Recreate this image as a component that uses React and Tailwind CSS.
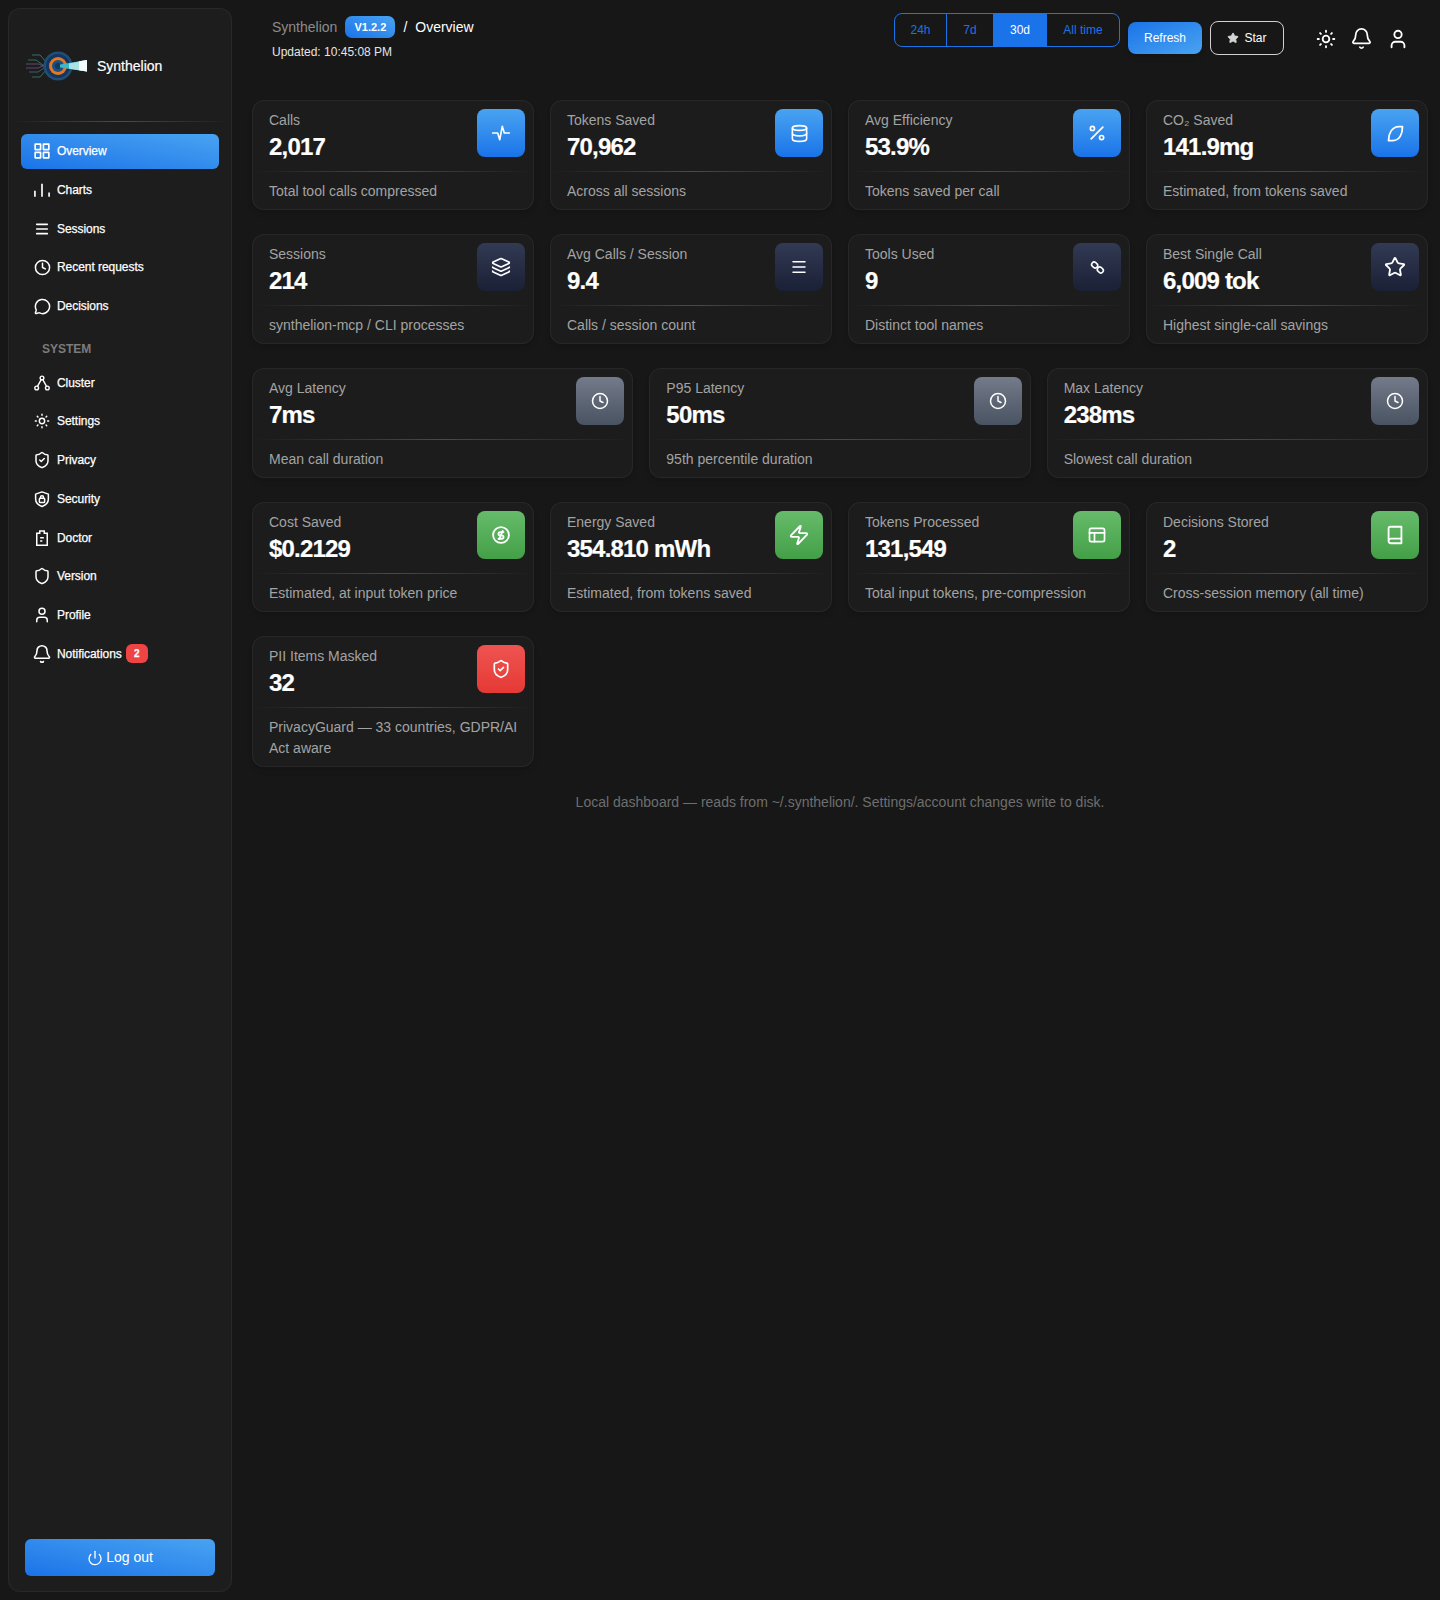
import { Bell, Clock, Database, Layers, Menu, MessageCircle, Percent, Power, Shield, ShieldCheck, Star, User, Zap } from "lucide-react";

function Svg({ size = 18, sw = 2, children }) {
    return (
        <svg width={size} height={size} viewBox="0 0 24 24" fill="none" stroke="currentColor" strokeWidth={sw} strokeLinecap="round" strokeLinejoin="round">
            {children}
        </svg>
    );
}

const GridIcon = (p) => (
    <Svg {...p} sw={2}>
        <rect x="3.8" y="3.8" width="6.5" height="6.5" /><rect x="13.7" y="3.8" width="6.5" height="6.5" />
        <rect x="3.8" y="13.7" width="6.5" height="6.5" /><rect x="13.7" y="13.7" width="6.5" height="6.5" />
    </Svg>
);
const BarsIcon = (p) => (
    <Svg {...p} sw={2}>
        <path d="M3.5 20v-7" strokeLinecap="butt" /><path d="M12 20V4.5" strokeLinecap="butt" /><path d="M20.5 20v-5" strokeLinecap="butt" />
    </Svg>
);
const ClusterIcon = (p) => (
    <Svg {...p} sw={2.1}>
        <circle cx="12" cy="4.5" r="2.8" /><circle cx="4" cy="19.5" r="2.8" /><circle cx="20" cy="19.5" r="2.8" />
        <path d="M10.8 7 5.2 17" /><path d="M13.2 7l5.6 10" />
    </Svg>
);
const SunIcon = (p) => (
    <Svg {...p} sw={2.2}>
        <circle cx="12" cy="12" r="4" />
        <path d="M12 2v1.5M12 20.5V22M4.9 4.9l1 1M18.1 18.1l1 1M2 12h1.5M20.5 12H22M4.9 19.1l1-1M18.1 5.9l1-1" />
    </Svg>
);
const ShieldLock = (p) => (
    <Svg {...p} sw={2}>
        <path d="M12 2.5l8.5 3v6.5c0 5-3.7 8.3-8.5 10-4.8-1.7-8.5-5-8.5-10V5.5z" />
        <rect x="8.5" y="11" width="7" height="5.5" rx="1" /><path d="M10 11V9.5a2 2 0 0 1 4 0V11" />
    </Svg>
);
const DoctorIcon = (p) => (
    <Svg {...p} sw={2}>
        <path d="M9 2.5h6v3h4v16H5v-16h4z" strokeLinecap="butt" strokeLinejoin="miter" />
        <path d="M9.5 11.5h5M9.5 16h3" strokeLinecap="butt" />
    </Svg>
);
const PulseIcon = (p) => (
    <Svg {...p} sw={2}>
        <path d="M2 12h6l2.5 8 3-16 2.5 8h6" />
    </Svg>
);
const LeafIcon = (p) => (
    <Svg {...p} sw={2}>
        <path d="M20 4c0 8-3 16-11 16H4c0-8 4-16 12-16z" />
    </Svg>
);
const LinkIcon = (p) => (
    <Svg {...p} sw={2.2}>
        <rect x="3.5" y="5" width="9" height="7" rx="3.5" transform="rotate(40 8 8.5)" />
        <rect x="11.5" y="12" width="9" height="7" rx="3.5" transform="rotate(40 16 15.5)" />
    </Svg>
);
const CoinIcon = (p) => (
    <Svg {...p} sw={2.2}>
        <circle cx="12" cy="12" r="9.5" />
        <path d="M15 8.5h-4a2 2 0 0 0 0 4h2a2 2 0 0 1 0 4H9" /><path d="M14 7l-4 10" />
    </Svg>
);
const PanelIcon = (p) => (
    <Svg {...p} sw={2}>
        <rect x="3" y="4" width="18" height="16" rx="2" /><path d="M3 9.5h18M9 9.5V20" />
    </Svg>
);
const BookIcon = (p) => (
    <Svg {...p} sw={2}>
        <path d="M5 18.5V5a2 2 0 0 1 2-2h12v18H7.5A2.5 2.5 0 0 1 5 18.5a2.5 2.5 0 0 1 2.5-2.5H19" />
    </Svg>
);

function Logo() {
    return (
        <svg width="62" height="32" viewBox="0 0 62 32" className="shrink-0">
            <g fill="none" strokeWidth="0.8">
                <path d="M3 10h8l7 5h12" stroke="#3f7f6a" />
                <path d="M7 5h8l7 8h10" stroke="#2f8f78" />
                <path d="M1 14h13l4 2h14" stroke="#6a5a86" />
                <path d="M1 18h12l5-2h14" stroke="#7a4f86" />
                <path d="M4 22h9l6-4h12" stroke="#3f6f8a" />
                <path d="M7 27h8l7-8h10" stroke="#3f7f6a" />
            </g>
            <circle cx="33" cy="16" r="14.5" fill="#1e4f78" />
            <circle cx="33" cy="16" r="12" fill="#17345f" />
            <circle cx="33" cy="16" r="9" fill="#e07a24" />
            <circle cx="33" cy="16" r="6" fill="#1f4f82" />
            <circle cx="33" cy="16" r="3" fill="#10395c" />
            <path d="M35 14.5 62 10v11.5L35 17.5z" fill="#3fb6c6" />
            <path d="M44 13.5 62 10v11.5l-18-2.8z" fill="#a9e3e8" />
            <path d="M54 11.2 62 10v11.5l-8-1.2z" fill="#f2fbfb" />
        </svg>
    );
}

const navTop = [
    ["Overview", () => <GridIcon size={20} />],
    ["Charts", () => <BarsIcon size={20} />],
    ["Sessions", () => <Menu size={16} strokeWidth={2.4} />],
    ["Recent requests", () => <Clock size={17} strokeWidth={2.1} />],
    ["Decisions", () => <MessageCircle size={17} strokeWidth={2.1} />],
];

const navSystem = [
    ["Cluster", () => <ClusterIcon size={16} />],
    ["Settings", () => <SunIcon size={16} />],
    ["Privacy", () => <ShieldCheck size={18} strokeWidth={2} />],
    ["Security", () => <ShieldLock size={18} />],
    ["Doctor", () => <DoctorIcon size={18} />],
    ["Version", () => <Shield size={18} strokeWidth={2} />],
    ["Profile", () => <User size={18} strokeWidth={2} />],
];

function NavItem({ label, icon: Icon, active, badge }) {
    return (
        <div className={"flex items-center h-[34.7px] mb-[4px] mx-[12px] pl-[11px] rounded-[6px] text-[12px] font-medium tracking-[-0.05px] text-white [-webkit-text-stroke:0.25px_white] " + (active ? "bg-gradient-to-tr from-[#1a73e8] to-[#49a3f1]" : "")}>
            <span className="w-[20px] flex justify-center shrink-0 [-webkit-text-stroke:0]"><Icon /></span>
            <span className="ml-[5px]">{label}</span>
            {badge && <span className="ml-[4px] w-[22px] h-[19px] rounded-[6px] bg-[#ef4444] text-[10px] font-bold flex items-center justify-center">{badge}</span>}
        </div>
    );
}

function Sidebar() {
    return (
        <aside className="w-[224px] shrink-0 flex flex-col bg-[#1d1d1d] border border-white/5 rounded-xl">
            <div className="flex items-center h-[112px] pt-[2px] pl-[16px]">
                <Logo />
                <span className="ml-[10px] text-[14px] font-medium text-white [-webkit-text-stroke:0.2px_white]">Synthelion</span>
            </div>
            <div className="h-px mb-[12px] bg-gradient-to-r from-transparent via-white/20 to-transparent" />
            {navTop.map(([label, icon], i) => (
                <NavItem key={label} label={label} icon={icon} active={i === 0} />
            ))}
            <div className="pl-[33px] mt-[13px] mb-[7px] text-[12px] leading-[18px] font-bold text-[#7b7b7b]">SYSTEM</div>
            {navSystem.map(([label, icon]) => (
                <NavItem key={label} label={label} icon={icon} />
            ))}
            <NavItem label="Notifications" icon={() => <Bell size={20} strokeWidth={1.9} />} badge="2" />
            <div className="mt-auto mx-[16px] mb-[15px]">
                <button className="w-full h-[37px] rounded-[6px] bg-gradient-to-tr from-[#1a73e8] to-[#49a3f1] flex items-center justify-center gap-[3px] text-[14px] font-medium text-white">
                    <Power size={16} strokeWidth={2} />
                    Log out
                </button>
            </div>
        </aside>
    );
}

const tones = {
    blue: "from-[#49a3f1] to-[#1a73e8]",
    dark: "from-[#323a54] to-[#1a2035]",
    grey: "from-[#747b8a] to-[#495361]",
    green: "from-[#66bb6a] to-[#43a047]",
    red: "from-[#ef5350] to-[#e53935]",
};

function Card({ title, value, note, tone, icon: Icon, size = 20 }) {
    return (
        <div className="bg-[#1c1c1c] border border-white/5 rounded-xl shadow-md">
            <div className="flex justify-between pl-4 pr-2 pt-2">
                <div>
                    <div className="pt-[1px] text-[14px] leading-[21px] text-[#a3a3a3]">{title}</div>
                    <div className="text-[24px] leading-[31px] font-bold text-white tracking-[-0.8px] [-webkit-text-stroke:0.2px_white]">{value}</div>
                </div>
                <div className={"w-12 h-12 rounded-lg bg-gradient-to-b flex items-center justify-center text-white shrink-0 " + tones[tone]}>
                    <Icon size={size} strokeWidth={2} />
                </div>
            </div>
            <div className="h-px mt-[9px] bg-gradient-to-r from-transparent via-white/20 to-transparent" />
            <div className="pl-4 pr-2 pt-[9px] pb-[7px] text-[14px] leading-[21px] text-[#a3a3a3]">{note}</div>
        </div>
    );
}

function Header() {
    return (
        <header className="flex justify-between h-[68px] pl-[20px] pr-[19px]">
            <div className="pt-[6px]">
                <div className="flex items-center h-[26px] text-[14px]">
                    <span className="mt-[1px] text-[#8c8c8c]">Synthelion</span>
                    <span className="ml-[8px] h-[22px] w-[50px] rounded-[7px] bg-gradient-to-tr from-[#1a73e8] to-[#49a3f1] text-[11px] font-bold text-white flex items-center justify-center">V1.2.2</span>
                    <span className="ml-[8px] text-white">/</span>
                    <span className="ml-[8px] text-white">Overview</span>
                </div>
                <div className="mt-[3px] text-[12px] leading-[18px] text-[#e5e5e5]">Updated: 10:45:08 PM</div>
            </div>
            <div className="flex items-start">
                <div className="mt-[5px] flex h-[34px] rounded-[8px] border border-[#1a73e8] text-[12px] text-[#1a73e8] overflow-hidden">
                    <span className="w-[52px] flex items-center justify-center border-r border-[#1a73e8]">24h</span>
                    <span className="w-[46px] flex items-center justify-center">7d</span>
                    <span className="w-[54px] flex items-center justify-center bg-[#1a73e8] font-medium text-white">30d</span>
                    <span className="w-[72px] flex items-center justify-center">All time</span>
                </div>
                <button className="mt-[14px] ml-[8px] w-[74px] h-[32px] rounded-[8px] bg-gradient-to-br from-[#1a73e8] to-[#49a3f1] shadow-md text-[12px] font-medium text-white">Refresh</button>
                <button className="mt-[13px] ml-[8px] w-[74px] h-[34px] rounded-[8px] border border-white/80 flex items-center justify-center gap-[5px] text-[12px] text-white">
                    <Star size={12} fill="currentColor" className="text-[#d4d4d4]" />
                    Star
                </button>
                <div className="mt-[19px] ml-[32px] flex items-center gap-[14px] text-white">
                    <SunIcon size={20} />
                    <Bell size={23} strokeWidth={1.8} />
                    <User size={22} strokeWidth={2} />
                </div>
            </div>
        </header>
    );
}

export default function App() {
    return (
        <div className="flex h-screen gap-[20px] bg-[#171717] py-2 pl-2 pr-[12px] font-['Liberation_Sans',Arial,sans-serif]">
            <Sidebar />
            <main className="flex-1 min-w-0 flex flex-col gap-6">
                <Header />
                <section className="grid grid-cols-4 gap-4">
                    <Card title="Calls" value="2,017" note="Total tool calls compressed" tone="blue" icon={PulseIcon} size={20} />
                    <Card title="Tokens Saved" value="70,962" note="Across all sessions" tone="blue" icon={Database} size={19} />
                    <Card title="Avg Efficiency" value="53.9%" note="Tokens saved per call" tone="blue" icon={Percent} />
                    <Card title="CO₂ Saved" value="141.9mg" note="Estimated, from tokens saved" tone="blue" icon={LeafIcon} size={21} />
                </section>
                <section className="grid grid-cols-4 gap-4">
                    <Card title="Sessions" value="214" note="synthelion-mcp / CLI processes" tone="dark" icon={Layers} />
                    <Card title="Avg Calls / Session" value="9.4" note="Calls / session count" tone="dark" icon={Menu} size={18} />
                    <Card title="Tools Used" value="9" note="Distinct tool names" tone="dark" icon={LinkIcon} size={17} />
                    <Card title="Best Single Call" value="6,009 tok" note="Highest single-call savings" tone="dark" icon={Star} size={22} />
                </section>
                <section className="grid grid-cols-3 gap-4">
                    <Card title="Avg Latency" value="7ms" note="Mean call duration" tone="grey" icon={Clock} size={18} />
                    <Card title="P95 Latency" value="50ms" note="95th percentile duration" tone="grey" icon={Clock} size={18} />
                    <Card title="Max Latency" value="238ms" note="Slowest call duration" tone="grey" icon={Clock} size={18} />
                </section>
                <section className="grid grid-cols-4 gap-4">
                    <Card title="Cost Saved" value="$0.2129" note="Estimated, at input token price" tone="green" icon={CoinIcon} size={20} />
                    <Card title="Energy Saved" value="354.810 mWh" note="Estimated, from tokens saved" tone="green" icon={Zap} size={22} />
                    <Card title="Tokens Processed" value="131,549" note="Total input tokens, pre-compression" tone="green" icon={PanelIcon} size={20} />
                    <Card title="Decisions Stored" value="2" note="Cross-session memory (all time)" tone="green" icon={BookIcon} size={22} />
                </section>
                <section className="grid grid-cols-4 gap-4">
                    <Card title="PII Items Masked" value="32" note="PrivacyGuard — 33 countries, GDPR/AI Act aware" tone="red" icon={ShieldCheck} size={20} />
                </section>
                <p className="mt-[1px] text-center text-[14px] leading-[21px] text-[#6e6e6e]">Local dashboard — reads from ~/.synthelion/. Settings/account changes write to disk.</p>
            </main>
        </div>
    );
}
